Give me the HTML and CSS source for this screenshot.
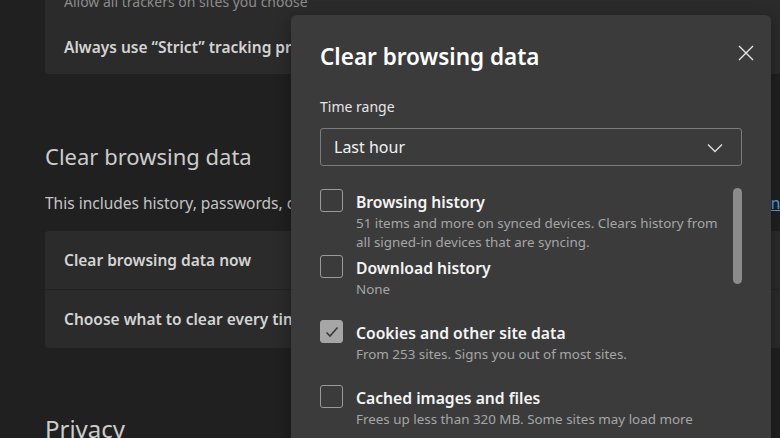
FILE: index.html
```html
<!DOCTYPE html>
<html lang="en">
<head>
<meta charset="utf-8">
<title>Clear browsing data</title>
<link rel="stylesheet" href="styles.css">
</head>
<body>
<main class="settings">
  <section class="card card-top">
    <div class="row row-sub">Allow all trackers on sites you choose</div>
    <div class="row row-strong">Always use “Strict” tracking prevention when browsing InPrivate</div>
  </section>

  <h2 class="section-title">Clear browsing data</h2>
  <p class="section-desc"><span class="desc-text">This includes history, passwords, cookies, and more. Only data from this profile will be deleted.</span><a class="desc-link" href="#">Manage your data</a></p>

  <section class="card">
    <div class="row row-strong row-item">Clear browsing data now</div>
    <div class="divider"></div>
    <div class="row row-strong row-item">Choose what to clear every time you close the browser</div>
  </section>

  <h2 class="section-title privacy">Privacy</h2>
</main>

<div class="dialog" role="dialog" aria-label="Clear browsing data">
  <button class="close" aria-label="Close">
    <svg width="16" height="16" viewBox="0 0 16 16"><path d="M1 1 L15 15 M15 1 L1 15" stroke="#e6e6e6" stroke-width="1.4" fill="none"/></svg>
  </button>
  <h1 class="dlg-title">Clear browsing data</h1>
  <div class="field-label">Time range</div>
  <div class="select">
    <span>Last hour</span>
    <svg class="chev" width="16" height="10" viewBox="0 0 16 10"><path d="M1 1.5 L8 8.5 L15 1.5" stroke="#dcdcdc" stroke-width="1.4" fill="none"/></svg>
  </div>

  <div class="list-wrap">
    <div class="list">
      <div class="item tight">
        <span class="cb"></span>
        <div class="item-text">
          <div class="item-title">Browsing history</div>
          <div class="item-sub">51 items and more on synced devices. Clears history from all signed-in devices that are syncing.</div>
        </div>
      </div>
      <div class="item">
        <span class="cb"></span>
        <div class="item-text">
          <div class="item-title">Download history</div>
          <div class="item-sub">None</div>
        </div>
      </div>
      <div class="item">
        <span class="cb checked">
          <svg width="16" height="16" viewBox="0 0 16 16"><path d="M2.5 8.5 L6 12 L13.5 3.5" stroke="#3a3a3a" stroke-width="1.6" fill="none"/></svg>
        </span>
        <div class="item-text">
          <div class="item-title">Cookies and other site data</div>
          <div class="item-sub">From 253 sites. Signs you out of most sites.</div>
        </div>
      </div>
      <div class="item">
        <span class="cb"></span>
        <div class="item-text">
          <div class="item-title">Cached images and files</div>
          <div class="item-sub">Frees up less than 320 MB. Some sites may load more slowly on your next visit.</div>
        </div>
      </div>
    </div>
    <div class="scrollbar"><div class="thumb"></div></div>
  </div>
</div>
</body>
</html>
```

FILE: styles.css
```css
* { box-sizing: border-box; }

html, body {
  margin: 0;
  padding: 0;
}

body {
  width: 780px;
  height: 438px;
  overflow: hidden;
  position: relative;
  background: #202020;
  font-family: "Noto Sans", "Open Sans", sans-serif;
  color: #d0d0d0;
}

.settings {
  padding-left: 45px;
  width: 820px;
}

.card {
  background: #2b2b2b;
  border-radius: 4px;
  width: 775px;
}

.card-top {
  margin-top: -12px;
}

.row {
  white-space: nowrap;
  overflow: hidden;
  padding-left: 19px;
}

.row-sub {
  font-size: 14px;
  line-height: 20px;
  padding-top: 4px;
  color: #8c8c8c;
}

.row-strong {
  font-size: 15.5px;
  font-weight: 600;
  color: #d4d4d4;
}

.card-top .row-strong {
  line-height: 24px;
  padding-top: 23px;
  padding-bottom: 15px;
}

.row-item {
  height: 58px;
  line-height: 58px;
}

.divider {
  height: 1px;
  background: #232323;
}

.section-title {
  margin: 0;
  font-size: 22px;
  font-weight: 400;
  color: #cccccc;
  line-height: 30px;
  margin-top: 67px;
}

.section-desc {
  margin: 0;
  margin-top: 22px;
  margin-bottom: 18px;
  display: flex;
  font-size: 15.5px;
  line-height: 20px;
  color: #c4c4c4;
  white-space: nowrap;
}

.desc-text {
  width: 703px;
  overflow: hidden;
  flex: none;
}

.desc-link {
  color: #4ea2e4;
  text-decoration: underline;
}

.privacy {
  font-size: 24px;
  margin-top: 66px;
}

/* dialog */
.dialog {
  position: absolute;
  left: 291px;
  top: 15px;
  width: 480px;
  height: 460px;
  background: #3b3b3b;
  border-radius: 6px;
  padding: 26px 29px 0 29px;
  box-shadow: 0 4px 16px rgba(0,0,0,0.35);
}

.close {
  position: absolute;
  top: 29px;
  right: 16px;
  width: 18px;
  height: 18px;
  padding: 0;
  border: 0;
  background: none;
  display: flex;
  align-items: center;
  justify-content: center;
}

.dlg-title {
  margin: 0;
  font-size: 22.5px;
  font-weight: 600;
  line-height: 32px;
  color: #ffffff;
}

.field-label {
  margin-top: 24px;
  font-size: 14px;
  line-height: 20px;
  color: #e6e6e6;
}

.select {
  margin-top: 11px;
  width: 422px;
  height: 38px;
  border: 1px solid #7c7c7c;
  border-radius: 3px;
  display: flex;
  align-items: center;
  justify-content: space-between;
  padding: 0 18px 0 13px;
  font-size: 16px;
  color: #f2f2f2;
}

.chev { margin-top: 1px; }

.list-wrap {
  margin-top: 22px;
  display: grid;
  grid-template-columns: 1fr 9px;
  column-gap: 8px;
  width: 422px;
  height: 240px;
  overflow: hidden;
}

.list {
  padding-top: 2px;
}

.item {
  display: grid;
  grid-template-columns: 22px 1fr;
  column-gap: 14px;
  margin-bottom: 22px;
}

.item.tight { margin-bottom: 4px; }

.cb {
  width: 23px;
  height: 23px;
  border: 1px solid #9a9a9a;
  border-radius: 3px;
  margin-top: -1px;
  display: flex;
  align-items: center;
  justify-content: center;
}

.cb.checked {
  background: #a6a6a6;
  border-color: #a6a6a6;
}

.item-title {
  font-size: 15.7px;
  font-weight: 600;
  line-height: 24px;
  color: #f4f4f4;
}

.item-sub {
  font-size: 13.4px;
  line-height: 19px;
  color: #a6a6a6;
}

.scrollbar {
  height: 96px;
}

.thumb {
  width: 9px;
  height: 96px;
  border-radius: 5px;
  background: #8b8b8b;
}
```
